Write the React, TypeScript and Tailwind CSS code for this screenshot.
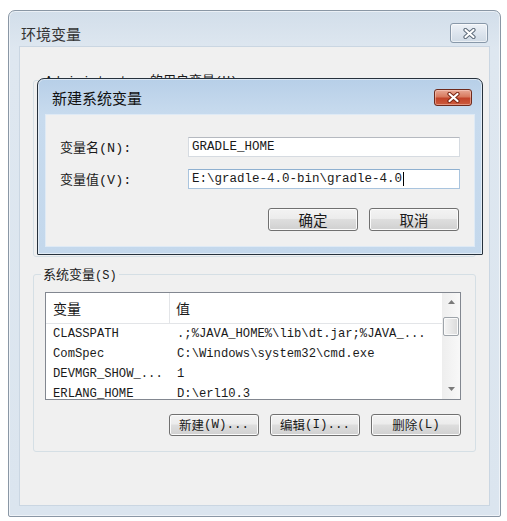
import React from "react";

function CloseX({ outline }: { outline: string }) {
  return (
    <svg width="15" height="11" viewBox="0 0 15 11">
      <path d="M3.5 2 L11.5 9 M11.5 2 L3.5 9" stroke={outline} strokeWidth="4.2" strokeLinecap="round" fill="none" />
      <path d="M3.5 2 L11.5 9 M11.5 2 L3.5 9" stroke="#ffffff" strokeWidth="2.2" strokeLinecap="round" fill="none" />
    </svg>
  );
}

function WinButton({ children, className }: { children: React.ReactNode; className: string }) {
  return (
    <div
      className={
        "flex items-center justify-center rounded-[3px] border border-[#707070] bg-[linear-gradient(#f3f3f3,#ececec_45%,#dedede_50%,#d0d0d0)] shadow-[inset_0_0_0_1px_#fbfbfb] text-[#1a1a1a] " +
        className
      }
    >
      {children}
    </div>
  );
}

const rows: [string, string][] = [
  ["CLASSPATH", ".;%JAVA_HOME%\\lib\\dt.jar;%JAVA_..."],
  ["ComSpec", "C:\\Windows\\system32\\cmd.exe"],
  ["DEVMGR_SHOW_...", "1"],
  ["ERLANG_HOME", "D:\\erl10.3"],
];

export default function App() {
  return (
    <div className="relative w-[507px] h-[521px] bg-white overflow-hidden">
      {/* Outer window */}
      <div className="ml-[8px] mt-[10px] w-[493px] h-[507px] rounded-t-[7px] rounded-b-[2px] border border-[#8a97a5] bg-[linear-gradient(#d2deea,#dee7f0_38px,#dbe5ef)] shadow-[inset_0_0_0_1px_rgba(255,255,255,0.55)] flex flex-col px-[11px] pb-[11px]">
        <div className="h-[36px] shrink-0 flex items-center justify-between pt-[8px]">
          <span className="ml-[1px] text-[15px] leading-none text-[#333] font-['Noto_Sans_CJK_SC',sans-serif]">环境变量</span>
          <div className="mr-[1px] w-[38px] h-[20px] rounded-[3px] border border-[#8898a9] bg-[linear-gradient(#eef2f7,#dde5ee_50%,#cfdae5)] shadow-[inset_0_0_0_1px_rgba(255,255,255,0.6)] flex items-center justify-center">
            <CloseX outline="#5d6b7a" />
          </div>
        </div>

        {/* Client area */}
        <div className="flex-1 bg-[#f0f0f0] pt-[24px] px-[13px] shadow-[0_0_0_1px_#cad6e2]">
          {/* User variables group (mostly hidden) */}
          <fieldset className="h-[186px] border border-[#d5dfe5] rounded-[3px]">
            <legend className="ml-[9px] px-[2px] leading-[16px] text-[#1a1a1a]">
              <span className="text-[12.5px] font-['Liberation_Mono',monospace]">Administrator </span>
              <span className="text-[13px] font-['Noto_Sans_CJK_SC',sans-serif]">的用户变量</span>
              <span className="text-[12.5px] font-['Liberation_Mono',monospace]">(U)</span>
            </legend>
          </fieldset>

          {/* System variables group */}
          <fieldset className="mt-[8px] border border-[#d5dfe5] rounded-[3px]">
            <legend className="ml-[7px] px-[2px] leading-[16px] text-[#1a1a1a]">
              <span className="text-[13px] font-['Noto_Sans_CJK_SC',sans-serif]">系统变量</span>
              <span className="text-[12px] font-['Liberation_Mono',monospace]">(S)</span>
            </legend>
            <div className="pl-[11px] pr-[14px] pb-[15px]">
              <div className="mt-[8px] h-[108px] border border-[#828790] bg-white flex">
                <div className="flex-1 overflow-hidden">
                  <div className="h-[31px] flex border-b border-[#e3e5e8] text-[14px] text-[#1a1a1a] font-['Noto_Sans_CJK_SC',sans-serif]">
                    <div className="w-[124px] pl-[7px] flex items-center border-r border-[#e3e5e8]">变量</div>
                    <div className="pl-[6px] flex items-center">值</div>
                  </div>
                  <div className="pt-[0px] text-[12.2px] text-[#1a1a1a] font-['Liberation_Mono',monospace]">
                    {rows.map(([n, v]) => (
                      <div key={n} className="h-[20px] flex items-center whitespace-nowrap">
                        <div className="w-[124px] pl-[7px]">{n}</div>
                        <div className="pl-[7px]">{v}</div>
                      </div>
                    ))}
                  </div>
                </div>
                <div className="w-[18px] shrink-0 bg-[linear-gradient(90deg,#eeeeee,#f8f8f8)] flex flex-col">
                  <div className="h-[17px] flex items-center justify-center">
                    <svg width="7" height="4" viewBox="0 0 7 4"><path d="M0 4 L3.5 0 L7 4 Z" fill="#7a7a7a" /></svg>
                  </div>
                  <div className="mt-[7px] mx-[1px] h-[19px] rounded-[2px] border border-[#9ea4aa] bg-[linear-gradient(90deg,#f4f4f4,#e8e8e8_50%,#dadada)] shadow-[inset_0_0_0_1px_#fafafa]" />
                  <div className="flex-1" />
                  <div className="h-[20px] flex items-center justify-center">
                    <svg width="7" height="4" viewBox="0 0 7 4"><path d="M0 0 L7 0 L3.5 4 Z" fill="#7a7a7a" /></svg>
                  </div>
                </div>
              </div>
              <div className="mt-[14px] flex justify-end gap-[11px]">
                <WinButton className="w-[90px] h-[22px]">
                  <span className="text-[12.5px] font-['Noto_Sans_CJK_SC',sans-serif]">新建</span>
                  <span className="text-[12.5px] font-['Liberation_Mono',monospace]">(W)...</span>
                </WinButton>
                <WinButton className="w-[90px] h-[22px]">
                  <span className="text-[12.5px] font-['Noto_Sans_CJK_SC',sans-serif]">编辑</span>
                  <span className="text-[12.5px] font-['Liberation_Mono',monospace]">(I)...</span>
                </WinButton>
                <WinButton className="w-[90px] h-[22px]">
                  <span className="text-[12.5px] font-['Noto_Sans_CJK_SC',sans-serif]">删除</span>
                  <span className="text-[12.5px] font-['Liberation_Mono',monospace]">(L)</span>
                </WinButton>
              </div>
            </div>
          </fieldset>
        </div>
      </div>

      {/* New system variable dialog (overlaid window) */}
      <div className="absolute left-[37px] top-[78px] w-[446px] h-[177px] rounded-t-[7px] rounded-b-[1px] border border-[#26313c] bg-[linear-gradient(#b7cfe8,#c8dbee_36px,#c4d8ec)] shadow-[inset_0_0_0_1px_rgba(255,255,255,0.5)] flex flex-col px-[8px] pb-[8px]">
        <div className="h-[36px] shrink-0 flex items-center justify-between pl-[6px]">
          <span className="text-[15px] leading-none text-[#111] font-['Noto_Sans_CJK_SC',sans-serif]">新建系统变量</span>
          <div className="mr-[2px] w-[38px] h-[17px] rounded-[3px] border border-[#6e2a1c] bg-[linear-gradient(#e9a996,#d87a5f_45%,#c2442a_55%,#cc5b3d)] shadow-[inset_0_0_0_1px_rgba(255,220,210,0.45)] flex items-center justify-center">
            <CloseX outline="#7c2614" />
          </div>
        </div>
        <div className="flex-1 bg-[#f0f0f0] pt-[22px] pl-[14px] pr-[13px] shadow-[0_0_0_1px_#dfeaf5]">
          <div className="flex items-center h-[20px]">
            <div className="w-[128px] text-[#1a1a1a]">
              <span className="text-[13px] font-['Noto_Sans_CJK_SC',sans-serif]">变量名</span>
              <span className="text-[13.5px] font-['Liberation_Mono',monospace]">(N):</span>
            </div>
            <div className="w-[272px] h-[20px] bg-white border border-[#d6dbe1] border-t-[#b5b9c0] flex items-center pl-[3px] text-[12.5px] text-[#1a1a1a] font-['Liberation_Mono',monospace]">
              GRADLE_HOME
            </div>
          </div>
          <div className="mt-[12px] flex items-center h-[20px]">
            <div className="w-[128px] text-[#1a1a1a]">
              <span className="text-[13px] font-['Noto_Sans_CJK_SC',sans-serif]">变量值</span>
              <span className="text-[13.5px] font-['Liberation_Mono',monospace]">(V):</span>
            </div>
            <div className="w-[272px] h-[20px] bg-white border border-[#a9c4de] border-t-[#8fb0d0] flex items-center pl-[3px] text-[12.5px] text-[#1a1a1a] font-['Liberation_Mono',monospace] whitespace-nowrap">
              E:\gradle-4.0-bin\gradle-4.0
              <span className="inline-block w-px h-[14px] bg-black ml-[1px]" />
            </div>
          </div>
          <div className="mt-[19px] flex justify-end gap-[11px] pr-[2px]">
            <WinButton className="w-[90px] h-[23px]">
              <span className="text-[14.5px] font-['Noto_Sans_CJK_SC',sans-serif]">确定</span>
            </WinButton>
            <WinButton className="w-[90px] h-[23px]">
              <span className="text-[14.5px] font-['Noto_Sans_CJK_SC',sans-serif]">取消</span>
            </WinButton>
          </div>
        </div>
      </div>
    </div>
  );
}
